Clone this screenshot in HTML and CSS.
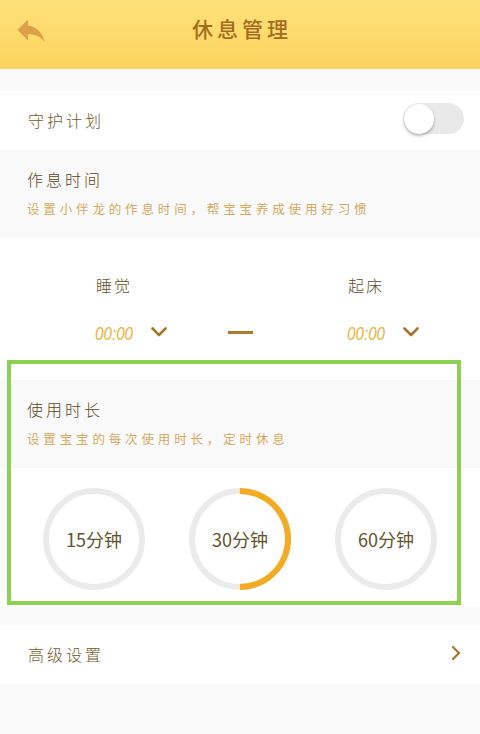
FILE: index.html
```html
<!DOCTYPE html>
<html lang="zh-CN">
<head>
<meta charset="utf-8">
<title>休息管理</title>
<link rel="stylesheet" href="styles.css">
</head>
<body>
<div class="page">
  <header class="topbar">
    <svg class="back" viewBox="2 4 20 16" width="30" height="24" aria-hidden="true">
      <path d="M10 9V5l-7 7 7 7v-4.1c5 0 8.5 1.6 11 5.1-1-5-4-10-11-11z" fill="#dda049"/>
    </svg>
    <h1 class="title">休息管理</h1>
  </header>

  <div class="gap gap-top"></div>

  <div class="row">
    <span class="row-label">守护计划</span>
    <span class="switch"><span class="knob"></span></span>
  </div>

  <section class="sec-head">
    <h2 class="sec-title">作息时间</h2>
    <p class="sec-sub">设置小伴龙的作息时间，帮宝宝养成使用好习惯</p>
  </section>

  <div class="schedule">
    <div class="sch-label">睡觉</div>
    <div></div>
    <div class="sch-label">起床</div>
    <div class="sch-time">
      <span class="time"><span>00:00</span></span>
      <svg class="chev-down" viewBox="0 0 16 10" width="16" height="10"><polyline points="1.5,1.5 8,8 14.5,1.5" fill="none" stroke="#a8762a" stroke-width="2.6" stroke-linecap="round" stroke-linejoin="round"/></svg>
    </div>
    <div class="dash"></div>
    <div class="sch-time">
      <span class="time"><span>00:00</span></span>
      <svg class="chev-down" viewBox="0 0 16 10" width="16" height="10"><polyline points="1.5,1.5 8,8 14.5,1.5" fill="none" stroke="#a8762a" stroke-width="2.6" stroke-linecap="round" stroke-linejoin="round"/></svg>
    </div>
  </div>

  <section class="sec-head">
    <h2 class="sec-title">使用时长</h2>
    <p class="sec-sub">设置宝宝的每次使用时长，定时休息</p>
  </section>

  <div class="durations">
    <div class="ring"><span>15分钟</span></div>
    <div class="ring half"><span>30分钟</span></div>
    <div class="ring"><span>60分钟</span></div>
  </div>

  <div class="gap gap-mid"></div>

  <div class="row">
    <span class="row-label">高级设置</span>
    <svg class="chev-right" viewBox="0 0 10 16" width="10" height="16"><polyline points="2,2 8,8 2,14" fill="none" stroke="#a8762a" stroke-width="2.2" stroke-linecap="round" stroke-linejoin="round"/></svg>
  </div>

  <div class="fill"></div>

  <div class="highlight"></div>
</div>
</body>
</html>
```

FILE: styles.css
```css
* { box-sizing: border-box; }

html, body {
  margin: 0;
  padding: 0;
  background: #ffffff;
}

body {
  font-family: "Noto Sans CJK SC", "Noto Sans", sans-serif;
  color: #6a5628;
}

.page {
  position: relative;
  width: 480px;
  height: 734px;
  display: flex;
  flex-direction: column;
  overflow: hidden;
}

/* header */
.topbar {
  height: 69px;
  flex: none;
  background: linear-gradient(180deg, #fee07a 0%, #fdd96a 60%, #fbd25e 100%);
  display: flex;
  align-items: center;
  justify-content: center;
  position: relative;
}

.back {
  position: absolute;
  left: 16px;
  top: 18px;
}

.title {
  margin: 0;
  font-size: 21px;
  font-weight: 500;
  letter-spacing: 4px;
  color: #a26c1f;
  line-height: 28px;
  margin-top: -13px;
  padding-left: 4px;
}

.gap {
  flex: none;
  background: #fafafa;
}
.gap-top { height: 22px; }
.gap-mid { height: 18px; }

.fill {
  flex: 1;
  background: #fafafa;
}

/* rows */
.row {
  flex: none;
  height: 59px;
  display: flex;
  align-items: center;
  justify-content: space-between;
  padding: 0 16px 0 28px;
  background: #ffffff;
}

.row-label {
  font-size: 16px;
  font-weight: 300;
  letter-spacing: 3px;
  color: #6f5b2a;
  line-height: 22px;
  margin-top: -2px;
}

.switch {
  width: 61px;
  height: 31px;
  border-radius: 16px;
  background: #e9e9e9;
  display: flex;
  align-items: center;
  padding-left: 1px;
  margin-top: -4px;
}

.knob {
  width: 30px;
  height: 30px;
  border-radius: 50%;
  background: #ffffff;
  box-shadow: 0 2px 3px rgba(0, 0, 0, 0.28);
}

.chev-right {
  margin-right: 3px;
  margin-top: -3px;
}

/* section head */
.sec-head {
  flex: none;
  height: 88px;
  background: #f9f9f9;
  padding: 17px 0 0 27px;
}

.sec-title {
  margin: 0;
  font-size: 16px;
  font-weight: 300;
  line-height: 24px;
  letter-spacing: 3px;
  color: #594821;
}

.sec-sub {
  margin: 9px 0 0;
  font-size: 12.5px;
  font-weight: 400;
  line-height: 18px;
  letter-spacing: 3.85px;
  color: #d4a963;
}

/* schedule */
.schedule {
  flex: none;
  height: 142px;
  display: grid;
  grid-template-columns: 133px 25px 1fr;
  grid-template-rows: 24px 28px;
  row-gap: 22px;
  padding: 35px 0 0 95px;
  background: #ffffff;
}

.sch-label {
  font-size: 16px;
  font-weight: 300;
  line-height: 24px;
  letter-spacing: 2px;
  color: #5e4d24;
  padding-left: 1px;
}

.schedule > .sch-label:nth-child(3) {
  margin-left: 94px;
}

.sch-time {
  display: flex;
  align-items: center;
  gap: 18px;
}

.schedule > .sch-time:last-child {
  margin-left: 94px;
}

.time {
  display: inline-block;
  width: 38px;
  height: 28px;
  line-height: 28px;
  white-space: nowrap;
}

.time span {
  display: inline-block;
  font-family: "Liberation Sans", sans-serif;
  font-style: italic;
  font-size: 19px;
  color: #e8b23a;
  transform: scaleX(0.8);
  transform-origin: left center;
}

.chev-down {
  margin-top: -2px;
}

.dash {
  align-self: center;
  height: 3px;
  background: #b07a28;
  margin-top: -2px;
}

/* durations */
.durations {
  flex: none;
  height: 139px;
  display: flex;
  justify-content: center;
  gap: 44px;
  padding-top: 20px;
  background: #ffffff;
}

.ring {
  position: relative;
  width: 102px;
  height: 102px;
  border-radius: 50%;
  border: 6px solid #ebebeb;
  display: flex;
  align-items: center;
  justify-content: center;
}

.ring span {
  font-size: 18px;
  font-weight: 400;
  color: #63532b;
  letter-spacing: 0;
}

.ring.half::after {
  content: "";
  position: absolute;
  inset: -6px;
  border-radius: 50%;
  border: 6px solid transparent;
  border-top-color: #f6aa1e;
  border-right-color: #f6aa1e;
  transform: rotate(45deg);
}

/* annotation overlay */
.highlight {
  position: absolute;
  left: 7px;
  top: 360px;
  width: 454px;
  height: 245px;
  border: 4px solid #8dd150;
  pointer-events: none;
}
```
